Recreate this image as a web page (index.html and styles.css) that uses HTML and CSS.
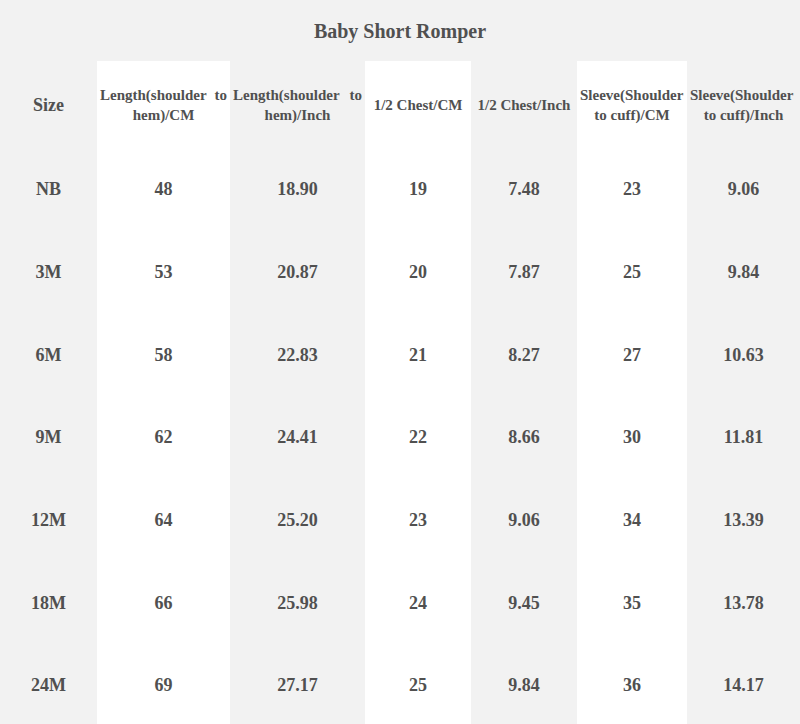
FILE: index.html
```html
<!DOCTYPE html>
<html>
<head>
<meta charset="utf-8">
<link rel="stylesheet" href="styles.css">
</head>
<body>
<div class="page">
  <h1 class="title">Baby Short Romper</h1>
  <div class="chart">
    <div class="cell head big">Size</div>
    <div class="cell head w">Length(shoulder to hem)/CM</div>
    <div class="cell head">Length(shoulder to hem)/Inch</div>
    <div class="cell head w">1/2 Chest/CM</div>
    <div class="cell head">1/2 Chest/Inch</div>
    <div class="cell head w">Sleeve(Shoulder to cuff)/CM</div>
    <div class="cell head">Sleeve(Shoulder to cuff)/Inch</div>

    <div class="cell">NB</div><div class="cell w">48</div><div class="cell">18.90</div><div class="cell w">19</div><div class="cell">7.48</div><div class="cell w">23</div><div class="cell">9.06</div>
    <div class="cell">3M</div><div class="cell w">53</div><div class="cell">20.87</div><div class="cell w">20</div><div class="cell">7.87</div><div class="cell w">25</div><div class="cell">9.84</div>
    <div class="cell">6M</div><div class="cell w">58</div><div class="cell">22.83</div><div class="cell w">21</div><div class="cell">8.27</div><div class="cell w">27</div><div class="cell">10.63</div>
    <div class="cell">9M</div><div class="cell w">62</div><div class="cell">24.41</div><div class="cell w">22</div><div class="cell">8.66</div><div class="cell w">30</div><div class="cell">11.81</div>
    <div class="cell">12M</div><div class="cell w">64</div><div class="cell">25.20</div><div class="cell w">23</div><div class="cell">9.06</div><div class="cell w">34</div><div class="cell">13.39</div>
    <div class="cell">18M</div><div class="cell w">66</div><div class="cell">25.98</div><div class="cell w">24</div><div class="cell">9.45</div><div class="cell w">35</div><div class="cell">13.78</div>
    <div class="cell">24M</div><div class="cell w">69</div><div class="cell">27.17</div><div class="cell w">25</div><div class="cell">9.84</div><div class="cell w">36</div><div class="cell">14.17</div>
  </div>
</div>
</body>
</html>
```
FILE: styles.css
```css
html, body {
  margin: 0;
  padding: 0;
  background: #f2f2f2;
  overflow: hidden;
}
.page {
  width: 800px;
  height: 724px;
  overflow: hidden;
  font-family: "Liberation Serif", "Times New Roman", serif;
  font-weight: bold;
  color: #505050;
}
.title {
  margin: 0;
  height: 61px;
  font-size: 20px;
  line-height: 20px;
  padding-top: 21px;
  box-sizing: border-box;
  text-align: center;
  font-weight: bold;
}
.chart {
  display: grid;
  grid-template-columns: 97px 133px 135px 106px 106px 110px 113px;
  grid-template-rows: 87.5px;
  grid-auto-rows: 82.67px;
}
.cell {
  display: flex;
  align-items: center;
  justify-content: center;
  text-align: center;
  font-size: 18px;
  background: #f2f2f2;
}
.cell.w {
  background: #ffffff;
}
.head {
  font-size: 15px;
  line-height: 20px;
  padding: 1px 3px 0;
  text-align: justify;
  text-align-last: center;
}
.head.big {
  font-size: 18px;
}
```
